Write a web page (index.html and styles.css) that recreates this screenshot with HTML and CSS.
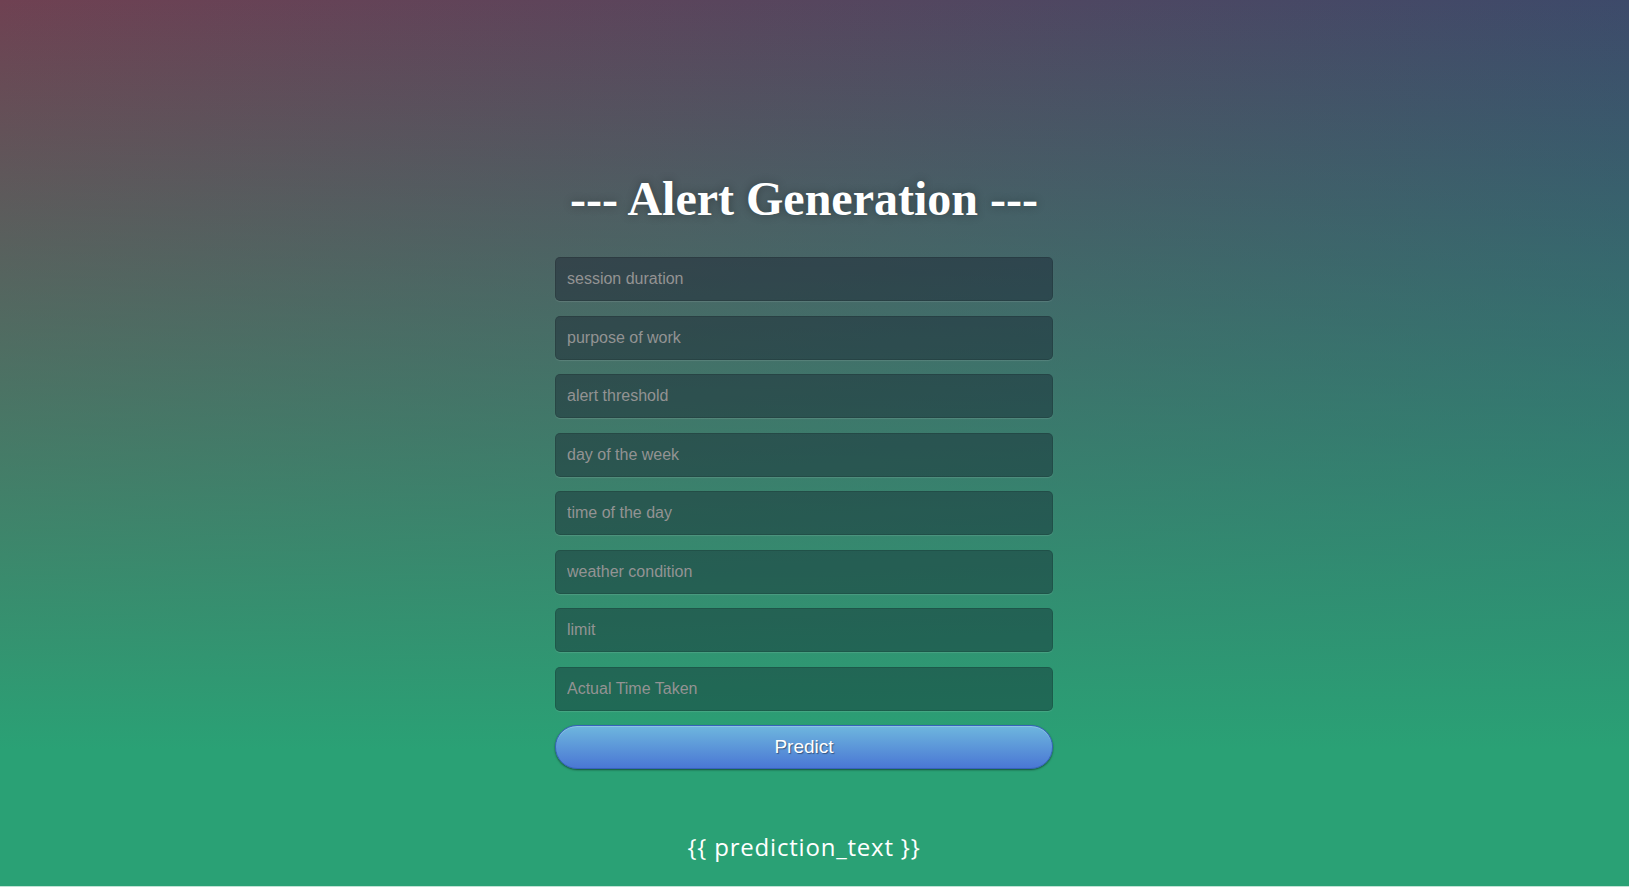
FILE: index.html
```html
<!DOCTYPE html>
<html lang="en">
<head>
<meta charset="utf-8">
<title>Alert Generation</title>
<link rel="stylesheet" href="styles.css">
</head>
<body>
<main class="page">
  <div class="login">
    <h1 class="title">--- Alert Generation ---</h1>
    <form class="form">
      <input class="field" type="text" placeholder="session duration">
      <input class="field" type="text" placeholder="purpose of work">
      <input class="field" type="text" placeholder="alert threshold">
      <input class="field" type="text" placeholder="day of the week">
      <input class="field" type="text" placeholder="time of the day">
      <input class="field" type="text" placeholder="weather condition">
      <input class="field" type="text" placeholder="limit">
      <input class="field" type="text" placeholder="Actual Time Taken">
      <button class="btn" type="button">Predict</button>
    </form>
    <p class="result">{{ prediction_text }}</p>
  </div>
</main>
</body>
</html>
```

FILE: styles.css
```css
html {
  background: #bfe3d5;
}

body {
  margin: 0;
  height: 886px;
  overflow: hidden;
  background:
    linear-gradient(to bottom, rgba(42, 161, 117, 0) 0px, #2aa175 750px),
    linear-gradient(to right, #6f4152, #3d4a6a);
  font-family: "Open Sans", "Liberation Sans", sans-serif;
  color: #fff;
}

.page {
  display: flex;
  justify-content: center;
  padding-top: 172px;
  padding-right: 21px;
}

.login {
  width: 498px;
  display: flex;
  flex-direction: column;
}

.title {
  margin: 0 0 32px;
  font: bold 48px/53px "Liberation Serif", "Times New Roman", serif;
  text-align: center;
  text-shadow: 0 0 10px rgba(0, 0, 0, 0.3);
}

.form {
  display: flex;
  flex-direction: column;
}

.field {
  height: 44px;
  margin: 0 0 14.5px;
  box-sizing: border-box;
  padding: 0 11px;
  background: rgba(8, 10, 30, 0.34);
  border: 1px solid rgba(0, 0, 0, 0.12);
  border-radius: 5px;
  font: 16px "Liberation Sans", Arial, sans-serif;
  color: #fff;
  outline: none;
  box-shadow: 0 1px 1px rgba(255, 255, 255, 0.12);
}

.field::placeholder {
  color: #939393;
}

.btn {
  height: 44px;
  border-radius: 22px;
  background: linear-gradient(to bottom, #6eb6de, #4a77d4);
  border: 1px solid #3762bc;
  color: #fff;
  font: 19px "Liberation Sans", Arial, sans-serif;
  text-shadow: 1px 1px 1px rgba(0, 0, 0, 0.4);
  box-shadow: inset 0 1px 0 rgba(255, 255, 255, 0.2), 0 1px 2px rgba(0, 0, 0, 0.5);
  cursor: pointer;
}

.result {
  margin: 62px 0 0;
  font: 24px/32.7px "Open Sans", sans-serif;
  letter-spacing: 0.8px;
  text-align: center;
}
```
